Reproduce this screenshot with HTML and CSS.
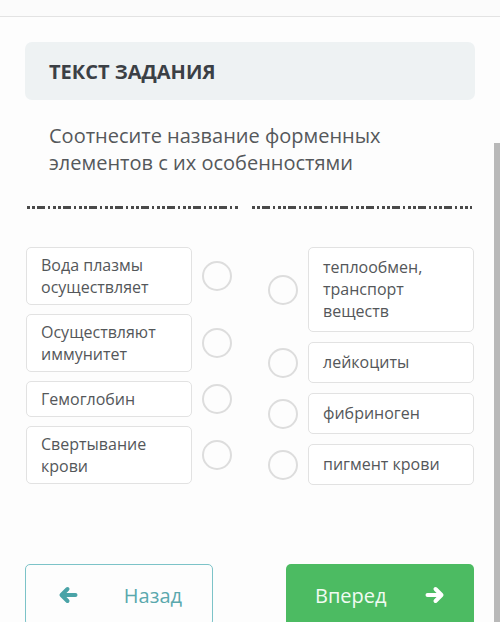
FILE: index.html
```html
<!DOCTYPE html>
<html>
<head>
<meta charset="UTF-8">
<title>Текст задания</title>
<link rel="stylesheet" href="styles.css">
</head>
<body>
<div class="topbar"></div>
<div class="page">
	<div class="taskHead">ТЕКСТ ЗАДАНИЯ</div>
	<div class="question">Соотнесите название форменных элементов с их особенностями</div>
	<div class="dashes"><span class="dashA"></span><span class="dashB"></span></div>

	<div class="match">
		<div class="col colLeft">
			<div class="row"><div class="item">Вода плазмы осуществляет</div><span class="dot"></span></div>
			<div class="row"><div class="item">Осуществляют иммунитет</div><span class="dot"></span></div>
			<div class="row"><div class="item">Гемоглобин</div><span class="dot"></span></div>
			<div class="row"><div class="item">Свертывание крови</div><span class="dot"></span></div>
		</div>
		<div class="col colRight">
			<div class="row"><span class="dot"></span><div class="item">теплообмен, транспорт веществ</div></div>
			<div class="row"><span class="dot"></span><div class="item">лейкоциты</div></div>
			<div class="row"><span class="dot"></span><div class="item">фибриноген</div></div>
			<div class="row"><span class="dot"></span><div class="item">пигмент крови</div></div>
		</div>
	</div>

	<div class="actions">
		<div class="btn btnBack">
			<svg width="20" height="18" viewBox="0 0 20 18"><path d="M17.5 9H4M9.5 3L3.5 9l6 6" fill="none" stroke="#4aa3a7" stroke-width="4" stroke-linecap="round" stroke-linejoin="round"/></svg>
			<span>Назад</span>
		</div>
		<div class="btn btnNext">
			<span>Вперед</span>
			<svg width="20" height="18" viewBox="0 0 20 18"><path d="M2.5 9H16M10.5 3l6 6-6 6" fill="none" stroke="#ffffff" stroke-width="4" stroke-linecap="round" stroke-linejoin="round"/></svg>
		</div>
	</div>
</div>
<div class="scrollThumb"></div>
</body>
</html>
```

FILE: styles.css
```css
body {
	margin: 0;
	background-color: #fdfdfd;
	font-family: 'Open Sans', 'Noto Sans', sans-serif;
	color: #4f5256;
	overflow: hidden;
	height: 622px;
}
.topbar {
	height: 16px;
	background-color: #fbfbfb;
	border-bottom: 1px solid #e3e3e3;
}
.page {
	padding: 25px 25px 0 25px;
}
.taskHead {
	height: 58px;
	display: flex;
	align-items: center;
	padding-left: 24px;
	background-color: #eef2f3;
	border-radius: 7px;
	font-size: 20px;
	font-weight: 700;
	color: #3b4045;
}
.question {
	margin-top: 22px;
	padding-left: 24px;
	padding-right: 60px;
	font-size: 20px;
	line-height: 27px;
	color: #55585b;
}
.dashes {
	margin-top: 30px;
	display: flex;
	gap: 14px;
	padding-left: 2px;
	height: 3px;
}
.dashA, .dashB {
	display: block;
	height: 3px;
	background-image: repeating-linear-gradient(90deg,
		#4a4a4a 0, #4a4a4a 3px, transparent 3px, transparent 5px,
		#4a4a4a 5px, #4a4a4a 8px, transparent 8px, transparent 10px,
		#4a4a4a 10px, #4a4a4a 18px, transparent 18px, transparent 21px,
		#4a4a4a 21px, #4a4a4a 23px, transparent 23px, transparent 26px);
}
.dashA { width: 211px; }
.dashB { width: 220px; }
.match {
	margin-top: 38px;
	display: flex;
	gap: 36px;
	padding-left: 1px;
}
.col {
	display: flex;
	flex-direction: column;
	width: 206px;
}
.colLeft { gap: 9px; }
.colRight { gap: 10px; }
.row {
	display: flex;
	align-items: center;
	gap: 10px;
}
.item {
	width: 166px;
	box-sizing: border-box;
	border: 1px solid #e2e2e2;
	border-radius: 5px;
	background-color: #fff;
	font-size: 16px;
	line-height: 22px;
	color: #54575a;
}
.colLeft .item { padding: 6px 14px 6px 14px; }
.colRight .item { padding: 8px 14px 9px 14px; }
.dot {
	width: 30px;
	height: 30px;
	box-sizing: border-box;
	border: 2px solid #dddddd;
	border-radius: 50%;
	flex-shrink: 0;
}
.actions {
	margin-top: 79px;
	display: flex;
	justify-content: space-between;
	padding-right: 1px;
}
.btn {
	width: 188px;
	height: 62px;
	box-sizing: border-box;
	border-radius: 5px;
	display: flex;
	align-items: center;
	justify-content: space-between;
	font-size: 20px;
}
.btnBack {
	border: 1px solid #7cc3c8;
	padding: 0 30px 0 32px;
	color: #5aa8ad;
}
.btnNext {
	background-color: #4cbb62;
	padding: 0 29px 0 29px;
	color: #f1fbf2;
}
.scrollThumb {
	position: absolute;
	right: 0;
	top: 143px;
	width: 6px;
	height: 479px;
	background-color: #b9b9b9;
}
```
